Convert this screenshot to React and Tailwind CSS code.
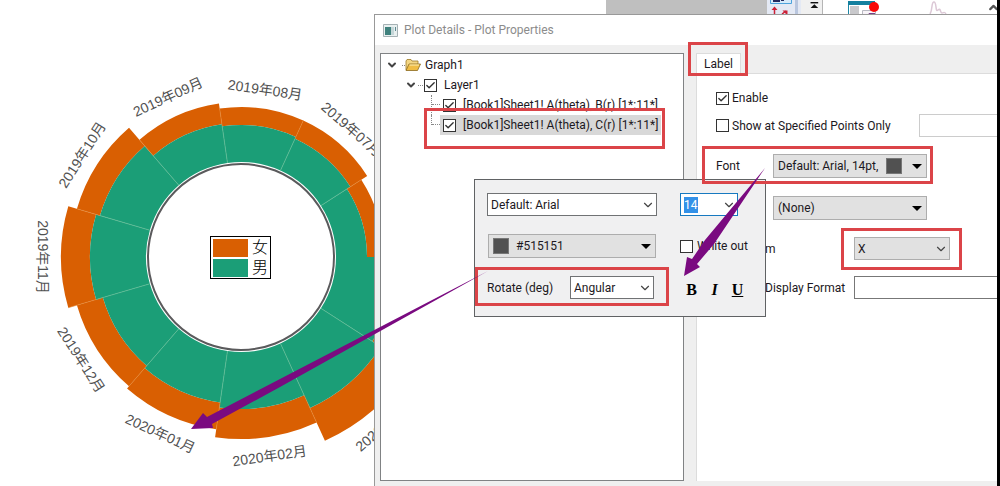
import React from "react";
import { Check, ChevronDown, ChevronUp } from "lucide-react";

const CENTER_X = 241;
const CENTER_Y = 257;
const INNER_RADIUS = 95;
const STEP = 360 / 11;

// angle is the middle of the sector, counter-clockwise from the right
const sectors = [
  { angle: STEP * 0.5, male: 126, total: 143 },
  { angle: STEP * 1.5, male: 130, total: 150, label: "2019年07月", labelRadius: 169 },
  { angle: STEP * 2.5, male: 132, total: 150, label: "2019年08月", labelRadius: 169 },
  { angle: STEP * 3.5, male: 134, total: 155, label: "2019年09月", labelRadius: 176 },
  { angle: STEP * 4.5, male: 147, total: 171, label: "2019年10月", labelRadius: 189 },
  { angle: STEP * 5.5, male: 151, total: 180, label: "2019年11月", labelRadius: 198 },
  { angle: STEP * 6.5, male: 144, total: 171, label: "2019年12月", labelRadius: 190 },
  { angle: STEP * 7.5, male: 147, total: 174, label: "2020年01月", labelRadius: 194 },
  { angle: STEP * 8.5, male: 152, total: 182, label: "2020年02月", labelRadius: 201 },
  { angle: STEP * 9.5, male: 166, total: 202, label: "2020年03月", labelRadius: 221 },
  { angle: STEP * 10.5, male: 156, total: 180 },
];

const point = (radius, angle) => {
  const rad = (angle * Math.PI) / 180;
  return [CENTER_X + radius * Math.cos(rad), CENTER_Y - radius * Math.sin(rad)];
};

const ringPath = (from, to, angle) => {
  const a = angle - STEP / 2;
  const b = angle + STEP / 2;
  return [
    `M${point(from, a)}`,
    `L${point(to, a)}`,
    `A${to} ${to} 0 0 0 ${point(to, b)}`,
    `L${point(from, b)}`,
    `A${from} ${from} 0 0 1 ${point(from, a)}Z`,
  ].join(" ");
};

const PolarChart = () => (
  <svg
    className="absolute left-0 top-0 h-[486px] w-[480px] font-['Liberation_Sans','Noto_Sans_CJK_SC',sans-serif] text-sm"
    viewBox="0 0 480 486"
  >
    {sectors.map(({ angle, male, total }) => (
      <g key={angle}>
        <path d={ringPath(male, total, angle)} fill="#d95f02" />
        <path d={ringPath(INNER_RADIUS, male, angle)} fill="#1b9e77" />
      </g>
    ))}
    {sectors.slice(0, -1).map(({ angle, male, total }) => {
      const [x1, y1] = point(INNER_RADIUS, angle + STEP / 2);
      const [x2, y2] = point(male, angle + STEP / 2);
      const [x3, y3] = point(total, angle + STEP / 2);
      return (
        <g key={angle}>
          <line x1={x1} y1={y1} x2={x2} y2={y2} stroke="#5fbb94" strokeWidth="0.8" />
          <line x1={x2} y1={y2} x2={x3} y2={y3} stroke="#e58a35" strokeWidth="0.6" />
        </g>
      );
    })}
    <circle cx={CENTER_X} cy={CENTER_Y} r="93" fill="#fff" stroke="#5a5a5c" strokeWidth="2" />
    {sectors
      .filter(({ label }) => label)
      .map(({ angle, label, labelRadius }) => {
        const [x, y] = point(labelRadius, angle);
        const rotate = angle > 179 ? 270 - angle : 90 - angle;
        return (
          <text
            key={label}
            x={x}
            y={y}
            fill="#515151"
            textAnchor="middle"
            dominantBaseline="central"
            transform={`rotate(${rotate} ${x} ${y})`}
          >
            {label}
          </text>
        );
      })}
  </svg>
);

const Legend = () => (
  <div className="absolute left-[210px] top-[236px] grid grid-cols-[35px_18px] items-center gap-x-1 gap-y-px border border-black bg-white py-px pl-0.5 font-['Liberation_Sans','Noto_Sans_CJK_SC',sans-serif] text-base leading-[19px] font-light text-black">
    <span className="h-[18px] bg-[#d95f02]" />
    <span>女</span>
    <span className="h-[18px] bg-[#1b9e77]" />
    <span>男</span>
  </div>
);

const BackgroundToolbar = () => (
  <div className="absolute right-0 top-0 flex h-3.5 w-[391px] overflow-hidden">
    <div className="w-[161px] bg-[#bfbfbf]" />
    <svg className="h-3.5 w-[34px] bg-[#e4e9f4]" viewBox="0 0 34 14">
      <path d="M28 0h3v14h-3z" fill="#b9c6de" />
      <path d="M3.500-1h21v4.500h-21z" fill="#d5eafa" stroke="#4da3dc" />
      <path d="M6 0h7v2h-7z" fill="#23285e" />
      <path d="M14 0h3v1h-3z" fill="#23285e" />
      <path d="M7.500 14V9M15 14l4-3" fill="none" stroke="#cc2036" strokeWidth="1.500" />
      <path d="M4.500 10l3-3.500 3 3.500zM15.500 10.500h5v5z" fill="#cc2036" />
    </svg>
    <svg className="h-3.5 w-[22px] border-r border-[#b5b5b5] bg-[#f0f0f0]" viewBox="0 0 22 14">
      <path d="M10 2.500h8" stroke="#111" strokeWidth="1.500" />
      <path d="M10 8l4-4 4 4z" fill="#111" />
    </svg>
    <svg className="h-3.5 grow" viewBox="0 0 174 14">
      <path d="M25 1h27v4h-27z" fill="#14809f" />
      <path d="M25.500 5v9" stroke="#1e87a5" fill="none" />
      <path d="M27 6h9v8h-9z" fill="#c9c9cc" />
      <path d="M39.500 14v-3.500h13V14" fill="#f8f4f8" stroke="#b9b9c2" />
      <path d="M45 14.500l1-1h6" fill="none" stroke="#7a3f86" />
      <circle cx="51" cy="7" r="5" fill="#f80909" />
      <path d="M107 14c3-5 1-12 4-12s1 11 4 8 2 3 4 3 2-2 4 1" fill="none" stroke="#dcc8d6" strokeWidth="1.500" />
      <ChevronUp x="164" y="1" width="13" height="13" strokeWidth="4" color="#555" />
    </svg>
  </div>
);

const Checkbox = ({ id, checked }) => (
  <span className="relative h-[13px] w-[13px] shrink-0">
    <input
      id={id}
      type="checkbox"
      defaultChecked={checked}
      className="peer block h-[13px] w-[13px] appearance-none border border-[#333] bg-white"
    />
    <Check
      className="pointer-events-none absolute left-px top-px hidden h-[11px] w-[11px] text-[#333] peer-checked:block"
      strokeWidth={3}
    />
  </span>
);

const Triangle = () => (
  <svg className="h-[5px] w-[10px] shrink-0" viewBox="0 0 10 5">
    <path d="M0 0h10L5 5z" fill="#000" />
  </svg>
);

const DropButton = ({ label, children, className }) => (
  <button
    type="button"
    aria-label={label}
    className={`flex h-6 items-center border border-[#adadad] bg-[#e1e1e1] px-[4px] ${className}`}
  >
    {children}
  </button>
);

const Dropdown = ({ id, value, className }) => (
  <span className={`relative flex h-[23px] border ${className}`}>
    <select id={id} aria-label={id} className="w-full appearance-none bg-transparent pl-[3px]">
      <option>{value}</option>
    </select>
    <ChevronDown className="pointer-events-none absolute right-px top-1 h-3.5 w-3.5 text-[#444]" strokeWidth={2} />
  </span>
);

const FolderIcon = () => (
  <svg className="h-4 w-4 shrink-0" viewBox="0 0 16 16">
    <path d="M1 13V4l1-1.500h4L7 4h6v3" fill="#f3d684" stroke="#9c7a26" strokeWidth="0.8" />
    <path d="M1 13.500L4 7h11.500L12.500 13.500z" fill="#f0bd45" stroke="#8a691e" strokeWidth="0.8" />
    <path d="M4.500 8h9.500" stroke="#fff1b8" />
  </svg>
);

const treeLeaves = [
  { id: "plot-b", text: "[Book1]Sheet1! A(theta), B(r) [1*:11*]" },
  { id: "plot-c", text: "[Book1]Sheet1! A(theta), C(r) [1*:11*]", selected: true },
];

const LayerTree = () => (
  <div className="w-[304px] shrink-0 border border-[#808284] bg-white pt-px leading-5">
    <div className="flex items-center pl-[5px]">
      <ChevronDown className="h-3 w-3" strokeWidth={4} color="#444" />
      <span className="ml-1 w-[3px] border-t border-dotted border-[#888]" />
      <FolderIcon />
      <span className="ml-1">Graph1</span>
    </div>
    <div className="flex items-center pl-6">
      <ChevronDown className="h-3 w-3" strokeWidth={4} color="#444" />
      <span className="mx-px w-[5px] border-t border-dotted border-[#888]" />
      <Checkbox id="layer1" checked />
      <label htmlFor="layer1" className="ml-[7px]">
        Layer1
      </label>
    </div>
    {treeLeaves.map(({ id, text, selected }) => (
      <div key={id} className="flex pl-[50px]">
        <span className={`w-[9px] border-l border-dotted border-[#888] ${selected ? "h-[10px]" : "h-5"}`}>
          <span className="block h-[10px] border-b border-dotted border-[#888]" />
        </span>
        <span className={`flex items-center px-[3px] ${selected ? "bg-[#d8d8d8]" : ""}`}>
          <Checkbox id={id} checked />
          <label htmlFor={id} className="ml-[7px]">
            {text}
          </label>
        </span>
      </div>
    ))}
  </div>
);

const LabelTab = () => (
  <div className="ml-3 flex min-w-0 grow flex-col">
    <button
      type="button"
      role="tab"
      aria-selected="true"
      className="h-5 self-start border-x border-t border-[#dcdcdc] bg-white px-[7px]"
    >
      Label
    </button>
    <div className="flex grow flex-col border-l border-t border-[#dcdcdc] bg-white">
      <div className="mt-[15px] flex items-center gap-[3px] pl-[19px] leading-[18px]">
        <Checkbox id="enable" checked />
        <label htmlFor="enable">Enable</label>
      </div>
      <div className="mt-[7px] flex h-[23px] items-center gap-[3px] pl-[19px]">
        <Checkbox id="points-only" />
        <label htmlFor="points-only" className="w-[184px] shrink-0 whitespace-nowrap">
          Show at Specified Points Only
        </label>
        <input aria-label="Points" className="h-[23px] w-0 grow border border-r-0 border-[#ccc] bg-white px-1" />
      </div>
      <div className="mt-[17px] flex items-center pl-[19px]">
        <span className="w-[57px]">Font</span>
        <DropButton label="Font" className="w-[154px]">
          <span>Default: Arial, 14pt,</span>
          <span className="ml-auto mr-[10px] h-4 w-4 border border-[#777] bg-[#515151]" />
          <Triangle />
        </DropButton>
      </div>
      <div className="mt-[18px] flex pl-[76px]">
        <DropButton label="Leader lines" className="w-[154px] justify-between">
          <span>(None)</span>
          <Triangle />
        </DropButton>
      </div>
      <div className="mt-[17px] flex items-center pl-[68px]">
        <label htmlFor="Source" className="w-[89px]">
          m
        </label>
        <Dropdown id="Source" value="X" className="w-[96px] border-[#adadad] bg-[#e1e1e1]" />
      </div>
      <div className="mt-4 flex items-center pl-[68px]">
        <label htmlFor="display-format" className="w-[89px] shrink-0 whitespace-nowrap">
          Display Format
        </label>
        <input id="display-format" className="h-[23px] w-0 grow border border-r-0 border-[#777] bg-white px-1" />
      </div>
    </div>
  </div>
);

const FontPopup = () => (
  <div className="absolute left-[474px] top-[179px] grid w-[292px] grid-cols-[193px_1fr] items-center gap-y-[18px] border border-[#606264] bg-[#f0f0f1] pb-[17px] pl-3 pt-[13px]">
    <Dropdown id="Font family" value="Default: Arial" className="w-[170px] border-[#707274] bg-white" />
    <span className="relative flex h-[23px] w-[58px] items-center border border-[#1779c0] bg-white pl-[3px]">
      <input aria-label="Font size" defaultValue="14" className="h-4 w-[14px] bg-[#3391e8] text-white" />
      <ChevronDown className="absolute right-px top-1 h-3.5 w-3.5 text-[#444]" strokeWidth={2} />
    </span>
    <DropButton label="Color" className="ml-px w-[168px]">
      <span className="h-4 w-4 border border-[#777] bg-[#515151]" />
      <span className="ml-[7px]">#515151</span>
      <span className="ml-auto flex">
        <Triangle />
      </span>
    </DropButton>
    <span className="flex items-center gap-1">
      <Checkbox id="white-out" />
      <label htmlFor="white-out">White out</label>
    </span>
    <span className="flex items-center">
      <label htmlFor="Rotate (deg)" className="w-[83px]">
        Rotate (deg)
      </label>
      <Dropdown id="Rotate (deg)" value="Angular" className="w-[84px] border-[#707274] bg-white" />
    </span>
    <span className="flex pt-1 font-['Liberation_Serif',serif] text-base leading-4 font-bold text-black">
      <button type="button" className="w-[23px]">
        B
      </button>
      <button type="button" className="w-[23px] italic">
        I
      </button>
      <button type="button" className="w-[23px] underline">
        U
      </button>
    </span>
  </div>
);

const PlotDetails = () => (
  <section className="absolute bottom-0 left-[374px] right-0 top-3.5 flex flex-col border-l border-t border-[#999] bg-[#efefef]">
    <header className="flex h-[30px] items-center gap-[6px] bg-white pl-2 text-[#8c8c8c]">
      <svg className="h-[13px] w-[15px]" viewBox="0 0 15 13">
        <path d="M.5.500h14v12h-14z" fill="#e9f0f0" stroke="#a5b1b4" />
        <path d="M2 3h6v8h-6z" fill="#3f817d" />
        <path d="M8 3h3v8h-3z" fill="#c4d6d8" />
        <path d="M12 3h1v4h-1z" fill="#5c8890" />
      </svg>
      <h1>Plot Details - Plot Properties</h1>
    </header>
    <div className="flex grow pb-[5px] pl-[5px] pt-2">
      <LayerTree />
      <LabelTab />
    </div>
  </section>
);

const highlights = [
  "left-[688px] top-[42px] w-[60px] h-[34px]",
  "left-[424px] top-[108px] w-[241px] h-[41px]",
  "left-[702px] top-[146px] w-[231px] h-[38px]",
  "left-[841px] top-[228px] w-[121px] h-[42px]",
  "left-[475px] top-[267px] w-[194px] h-[39px]",
];

const Annotations = () => (
  <div className="pointer-events-none absolute inset-0">
    {highlights.map((place) => (
      <div key={place} className={`absolute border-3 border-[#db4448] ${place}`} />
    ))}
    <svg className="absolute left-0 top-0 h-[486px] w-[997px]" viewBox="0 0 997 486" fill="#7a0a80">
      <path d="M488 271L207 417L203 413L191 429L213 428L212 424L280 387Z" />
      <path d="M765 168L705 240L692 259L687 257L684 276L700 267L697 264L714 244Z" />
    </svg>
  </div>
);

const App = () => (
  <div className="flex min-h-screen bg-white font-[Roboto,'Open_Sans',sans-serif] text-xs text-[#1c1822]">
    <main className="relative min-w-0 grow overflow-hidden">
      <PolarChart />
      <Legend />
      <BackgroundToolbar />
      <PlotDetails />
      <FontPopup />
      <Annotations />
    </main>
    <div className="w-[3px] shrink-0 bg-black" />
  </div>
);

export default App;
